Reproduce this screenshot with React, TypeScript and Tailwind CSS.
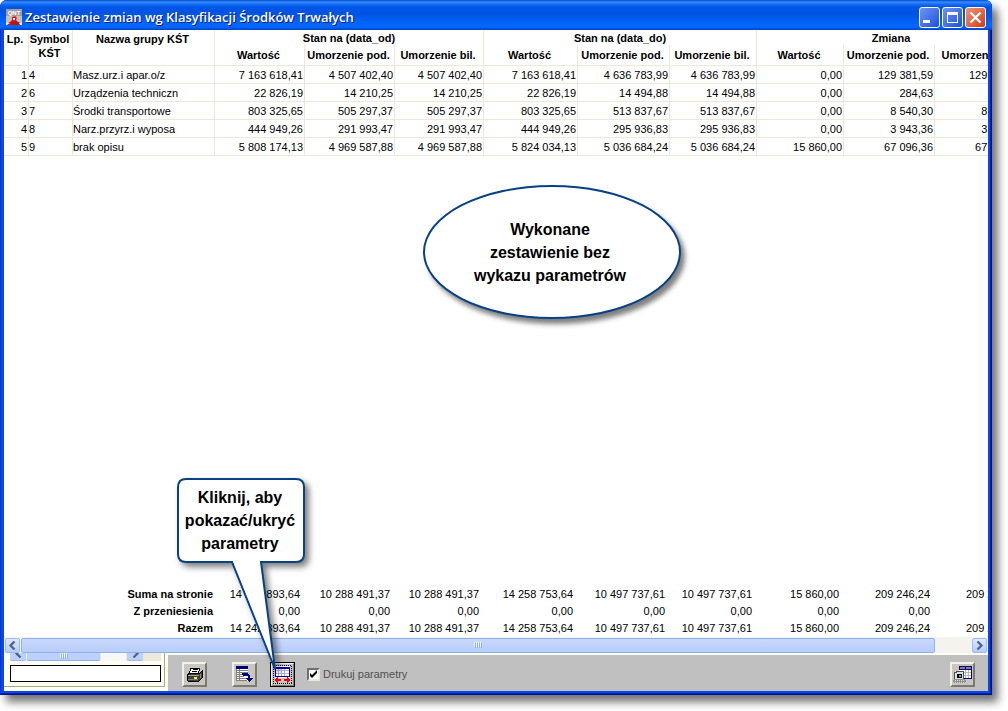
import React from "react";

type Row = { id: string; symbol: string; name: string; values: string[] };

const rows: Row[] = [
  { id: "1", symbol: "4", name: "Masz.urz.i apar.o/z", values: ["7 163 618,41", "4 507 402,40", "4 507 402,40", "7 163 618,41", "4 636 783,99", "4 636 783,99", "0,00", "129 381,59", "129 381,59"] },
  { id: "2", symbol: "6", name: "Urządzenia techniczn", values: ["22 826,19", "14 210,25", "14 210,25", "22 826,19", "14 494,88", "14 494,88", "0,00", "284,63", "284,63"] },
  { id: "3", symbol: "7", name: "Środki transportowe", values: ["803 325,65", "505 297,37", "505 297,37", "803 325,65", "513 837,67", "513 837,67", "0,00", "8 540,30", "8 540,30"] },
  { id: "4", symbol: "8", name: "Narz.przyrz.i wyposa", values: ["444 949,26", "291 993,47", "291 993,47", "444 949,26", "295 936,83", "295 936,83", "0,00", "3 943,36", "3 943,36"] },
  { id: "5", symbol: "9", name: "brak opisu", values: ["5 808 174,13", "4 969 587,88", "4 969 587,88", "5 824 034,13", "5 036 684,24", "5 036 684,24", "15 860,00", "67 096,36", "67 096,36"] },
];

const sums = ["14 242 893,64", "10 288 491,37", "10 288 491,37", "14 258 753,64", "10 497 737,61", "10 497 737,61", "15 860,00", "209 246,24", "209 246,24"];
const zeros = sums.map(() => "0,00");
const totals = [
  { label: "Suma na stronie", values: sums },
  { label: "Z przeniesienia", values: zeros },
  { label: "Razem", values: sums },
];

function Columns() {
  return (
    <colgroup>
      <col className="w-[25px]" />
      <col className="w-[44px]" />
      <col className="w-[142px]" />
      <col className="w-[90px]" />
      <col className="w-[90px]" />
      <col className="w-[89px]" />
      <col className="w-[94px]" />
      <col className="w-[92px]" />
      <col className="w-[87px]" />
      <col className="w-[87px]" />
      <col className="w-[91px]" />
      <col className="w-[91px]" />
    </colgroup>
  );
}

function DataTable() {
  const head = "border-b border-r border-[#ece9d8] p-0 pr-0.5 font-bold";
  const cell = "border-b border-r border-[#ece9d8] py-0 whitespace-nowrap";
  return (
    <table className="w-[1022px] table-fixed border-separate border-spacing-0 text-[11px] leading-[14px]">
      <Columns />
      <thead>
        <tr className="h-[15px]">
          <th rowSpan={2} className={`${head} pt-0.5 align-top`}>Lp.</th>
          <th rowSpan={2} className={`${head} pt-0.5 align-top`}>Symbol KŚT</th>
          <th rowSpan={2} className={`${head} pt-0.5 align-top`}>Nazwa grupy KŚT</th>
          <th colSpan={3} className="border-r border-[#ece9d8] p-0 font-bold">Stan na (data_od)</th>
          <th colSpan={3} className="border-r border-[#ece9d8] p-0 font-bold">Stan na (data_do)</th>
          <th colSpan={3} className="border-r border-[#ece9d8] p-0 font-bold">Zmiana</th>
        </tr>
        <tr className="h-[21px]">
          {[0, 1, 2].map((g) => (
            <React.Fragment key={g}>
              <th className={head}>Wartość</th>
              <th className={`${head} whitespace-nowrap`}>Umorzenie pod.</th>
              <th className={`${head} whitespace-nowrap`}>Umorzenie bil.</th>
            </React.Fragment>
          ))}
        </tr>
      </thead>
      <tbody>
        {rows.map((r) => (
          <tr key={r.id} className="h-[18px]">
            <td className={`${cell} pr-px pl-0 text-right`}>{r.id}</td>
            <td className={`${cell} px-0`}>{r.symbol}</td>
            <td className={`${cell} px-0`}>{r.name}</td>
            {r.values.map((v, i) => (
              <td key={i} className={`${cell} px-px text-right`}>{v}</td>
            ))}
          </tr>
        ))}
      </tbody>
    </table>
  );
}

function TotalsTable() {
  return (
    <table className="mb-px w-[1022px] table-fixed border-separate border-spacing-0 text-[11px] leading-[14px]">
      <Columns />
      <tbody>
        {totals.map((t) => (
          <tr key={t.label} className="h-[17px]">
            <th colSpan={3} className="p-0 pr-0.5 text-right font-bold">{t.label}</th>
            {t.values.map((v, i) => (
              <td key={i} className="p-0 pr-[5px] text-right whitespace-nowrap">{v}</td>
            ))}
          </tr>
        ))}
      </tbody>
    </table>
  );
}

function Logo() {
  return (
    <svg width="16" height="16" viewBox="0 0 16 16" aria-hidden="true">
      <rect width="16" height="16" fill="#c4c0c0" />
      <path d="M0 0h16v7H0z" fill="#a39c9c" />
      <text x="8" y="6" textAnchor="middle" fontSize="6" fontWeight="bold" fontFamily="Liberation Sans, sans-serif" fill="#fff">QNT</text>
      <path d="M6 8l3-1 2 2-1 2 3 3H3l3-3z" fill="#d81818" />
      <path d="M7 9h2v2H7z" fill="#fff" />
      <path d="M0 14q8-3 16 0v2H0z" fill="#c01414" />
      <path d="M0 13l4 1-3 2H0zM13 14l3-1v3h-2z" fill="#eee" />
    </svg>
  );
}

function Chevron({ left }: { left?: boolean }) {
  return (
    <svg width="9" height="9" viewBox="0 0 9 9" className="shrink-0" aria-hidden="true">
      <path d={left ? "M6.5 0.5l-4 4 4 4" : "M2.5 0.5l4 4-4 4"} fill="none" stroke="#4d6185" strokeWidth="2.2" />
    </svg>
  );
}

function Grip() {
  return (
    <svg width="8" height="6" viewBox="0 0 8 6" shapeRendering="crispEdges" aria-hidden="true">
      <path d="M0.5 0v5M2.5 0v5M4.5 0v5M6.5 0v5" stroke="#eef4fe" />
      <path d="M1.5 1v5M3.5 1v5M5.5 1v5M7.5 1v5" stroke="#8cb0f8" />
    </svg>
  );
}

function PrinterIcon() {
  return (
    <svg width="17" height="16" viewBox="0 0 17 16" className="shrink-0" shapeRendering="crispEdges" aria-hidden="true">
      <path d="M5 1h9l-2 6H3z" fill="#fff" stroke="#000" />
      <path d="M7 2.500h5M6 4.500h5" stroke="#000" />
      <path d="M1 8l3-2h10l2-2v7l-3 3H2l-1-1z" fill="#404040" stroke="#000" />
      <path d="M2 8.500h11" stroke="#a0a0a0" fill="none" />
      <path d="M2 12.500h10" stroke="#808080" />
      <path d="M8 10h3v2H8z" fill="#ff0" />
      <path d="M14.500 7v4" stroke="#909090" />
    </svg>
  );
}

function SheetArrowIcon() {
  return (
    <svg width="17" height="17" viewBox="0 0 17 17" className="shrink-0" shapeRendering="crispEdges" aria-hidden="true">
      <path d="M0 0h12v15H0z" fill="#fff" />
      <path d="M0 0h12v3H0z" fill="#000080" />
      <path d="M0 4.500h12M0 6.500h12M0 8.500h9M0 10.500h8M0 12.500h10M0 14.500h11M3.500 3v12M0.500 3v12" stroke="#808080" />
      <path d="M6 7h5l3 2v3h3l-4 4-4-4h3v-2H7z" fill="#000080" />
    </svg>
  );
}

function FitWidthIcon() {
  return (
    <svg width="19" height="19" viewBox="0 0 19 19" className="shrink-0" shapeRendering="crispEdges" aria-hidden="true">
      <rect x="0.5" y="0.5" width="18" height="18" fill="none" stroke="#000" strokeDasharray="1 1" />
      <path d="M2 1h15v12H2z" fill="#fff" />
      <path d="M2 5.500h14M2 8.500h14M5.500 2v10M8.500 2v10M11.500 2v10" stroke="#b4b4d0" />
      <path d="M2.500 2.500h14v9h-14z" stroke="#0000b0" fill="none" />
      <path d="M2 2h15v2H2z" fill="#0000b0" />
      <path d="M1.500 15l3.500-3v2h3v2H5v2zM17.500 15l-3.500-3v2h-3v2h3v2z" fill="#f00" />
    </svg>
  );
}

function ViewTableIcon() {
  return (
    <svg width="19" height="18" viewBox="0 0 19 18" className="shrink-0" shapeRendering="crispEdges" aria-hidden="true">
      <path d="M6 0h13v13H6z" fill="#fff" />
      <path d="M6 0h13v4H6z" fill="#000080" />
      <path d="M7 1h5v2H7zM13 1h5v2h-5z" fill="#808080" />
      <path d="M6 6.500h12M6 9.500h12M12.500 4v8M15.500 4v8" stroke="#b8b8b8" />
      <path d="M18.500 0v13M10 12.500h9" stroke="#000080" />
      <path d="M2 5h9v8H1V7z" fill="#e0e0e0" />
      <path d="M1.500 13V6.500h2V5.500h7v7" fill="none" stroke="#505050" />
      <path d="M4 8h5v4H4z" fill="#000" />
      <path d="M6 9h2v2H6z" fill="#00d8d8" />
      <path d="M1 13h11l1 2-1 2H1l-1-2z" fill="#909090" />
      <path d="M2 14.500h10M2 16.500h9" stroke="#d8d8d8" strokeDasharray="1 1" />
    </svg>
  );
}

const scrollButton =
  "flex h-[15px] w-[15px] shrink-0 items-center justify-center rounded-[2px] border border-[#9ebcf3] bg-linear-to-b from-[#dde7fe] to-[#b5cbfa]";
const toolButton =
  "flex h-[25px] w-[25px] items-center justify-center border-2 border-t-[#f4f2e8] border-l-[#f4f2e8] border-r-[#7c7a70] border-b-[#7c7a70] bg-[#c8c6be]";
const titleButton =
  "flex h-[21px] w-[21px] items-center justify-center rounded-[3px] border border-white";

export default function App() {
  return (
    <div className="flex min-h-screen overflow-hidden bg-white pr-4 pb-4 font-['Liberation_Sans',Arial,sans-serif] text-black">
      <main className="relative flex min-w-0 flex-1 flex-col rounded-t-[7px] bg-[#0a48e0] px-1 pb-1 shadow-[inset_-1px_-1px_0_#00138c,inset_1px_0_0_#0831d9,inset_-2px_-2px_0_#0020b4,6px_7px_8px_rgba(0,0,0,0.55)]">
        <header className="-mx-1 flex h-[30px] shrink-0 items-center rounded-t-[7px] bg-[linear-gradient(180deg,#0048c8_0,#3a8cff_2px,#1670f8_4px,#0055e5_7px,#0054e3_14px,#0066fa_23px,#0268ff_27px,#0040c0_30px)] pt-1 pr-1.5 pl-1.5">
          <Logo />
          <h1 className="ml-[3px] flex-1 truncate font-['Open_Sans','Noto_Sans',sans-serif] text-[13px] leading-[18px] font-semibold text-white [text-shadow:1px_1px_0_#0a1883]">
            Zestawienie zmian wg Klasyfikacji Środków Trwałych
          </h1>
          <div className="flex gap-0.5">
            <button type="button" aria-label="Minimalizuj" className={`${titleButton} bg-linear-to-br from-[#6f94f4] to-[#1c4fd8]`}>
              <svg width="15" height="15" viewBox="0 0 15 15" aria-hidden="true"><path d="M1 10h7v3H1z" fill="#fff" /></svg>
            </button>
            <button type="button" aria-label="Maksymalizuj" className={`${titleButton} bg-linear-to-br from-[#6f94f4] to-[#1c4fd8]`}>
              <svg width="13" height="13" viewBox="0 0 13 13" shapeRendering="crispEdges" aria-hidden="true"><path d="M1 1h11v11H1zM2 4v7h9V4z" fill="#fff" fillRule="evenodd" /></svg>
            </button>
            <button type="button" aria-label="Zamknij" className={`${titleButton} bg-linear-to-br from-[#f0937a] to-[#d03808]`}>
              <svg width="13" height="13" viewBox="0 0 13 13" aria-hidden="true"><path d="M1.500 1.500l10 10M11.500 1.500l-10 10" stroke="#fff" strokeWidth="2.300" /></svg>
            </button>
          </div>
        </header>

        <section className="flex min-h-0 flex-1 flex-col justify-between overflow-hidden bg-white">
          <DataTable />
          <TotalsTable />
        </section>

        <div className="flex h-4 shrink-0 items-center gap-px bg-[#f4f3ee] px-px">
          <button type="button" aria-label="Przewiń w lewo" className={scrollButton}><Chevron left /></button>
          <div className="flex h-[15px] flex-1 items-center justify-center rounded-[2px] border border-[#8fb0ee] bg-linear-to-b from-[#c9d8fc] to-[#b9cdfb]"><Grip /></div>
          <div className="w-[35px]" />
          <button type="button" aria-label="Przewiń w prawo" className={scrollButton}><Chevron /></button>
        </div>

        <footer className="flex h-[38px] shrink-0 bg-[#fffff0]">
          <div className="w-[164px] shrink-0 pr-[3px]">
            <div className="h-[34px] border-r border-b border-[#a8a698] pr-[3px] pl-1.5">
              <div className="flex h-2 gap-px overflow-hidden bg-[#ece9d8]">
                <div className="flex w-4 items-end justify-center overflow-hidden rounded-b-[2px] border-b border-[#9ebcf3] bg-[#bdd0fb] pb-0.5"><Chevron left /></div>
                <div className="flex w-[73px] items-start justify-center rounded-b-[2px] border-b border-[#8fb0ee] bg-[#bdd0fb]"><Grip /></div>
                <div className="w-[25px] bg-[#f8f8f4]" />
                <div className="flex w-4 items-end justify-center overflow-hidden rounded-b-[2px] border-b border-[#9ebcf3] bg-[#bdd0fb] pb-0.5"><Chevron /></div>
              </div>
              <input aria-label="Wartość parametru" className="mt-1 block h-[17px] w-full border border-black bg-white px-1 text-[11px] outline-none" />
            </div>
          </div>
          <div className="mt-0.5 flex flex-1 items-start bg-[#c0c0c0] pt-[7px] pr-[13px] pl-3.5">
            <button type="button" aria-label="Drukuj" className={toolButton}><PrinterIcon /></button>
            <button type="button" aria-label="Eksportuj zestawienie" className={`${toolButton} ml-[25px]`}><SheetArrowIcon /></button>
            <button type="button" aria-label="Pokaż lub ukryj parametry" className={`${toolButton} ml-[13px] outline outline-black -outline-offset-1`}><FitWidthIcon /></button>
            <label className="ml-3 flex h-[25px] items-center gap-[3px] text-[11px] text-[#505050]">
              <span className="grid">
                <input type="checkbox" defaultChecked className="peer col-start-1 row-start-1 h-[13px] w-[13px] appearance-none border-2 border-t-[#707070] border-l-[#707070] border-r-[#ece9d8] border-b-[#ece9d8] bg-white" />
                <svg width="13" height="13" viewBox="0 0 13 13" className="pointer-events-none invisible col-start-1 row-start-1 peer-checked:visible" aria-hidden="true"><path d="M3 5v3l2 2 5-5V2L5 7z" fill="#000" /></svg>
              </span>
              Drukuj parametry
            </label>
            <button type="button" aria-label="Podgląd tabeli" className={`${toolButton} ml-auto`}><ViewTableIcon /></button>
          </div>
        </footer>

        <aside className="absolute top-[185px] left-[423px] flex h-[134px] w-[258px] items-center justify-center rounded-[50%] border-2 border-[#084284] bg-white pr-1 text-center text-[16px] leading-[23px] font-bold shadow-[4px_5px_5px_rgba(0,0,0,0.5)]">
          <p>Wykonane<br />zestawienie bez<br />wykazu parametrów</p>
        </aside>

        <aside className="absolute top-[477px] left-[177px] h-[200px] w-[136px]">
          <svg width="136" height="200" viewBox="0 0 136 200" className="absolute inset-0 [filter:drop-shadow(4px_4px_3px_rgba(0,0,0,0.5))]" aria-hidden="true">
            <path d="M9 2H119Q127 2 127 10V77Q127 85 119 85H84L98 192L55 85H9Q1 85 1 77V10Q1 2 9 2Z" fill="#fff" stroke="#084284" strokeWidth="2" />
          </svg>
          <p className="relative w-[126px] pt-[9px] text-center text-[16px] leading-[23px] font-bold">
            Kliknij, aby<br />pokazać/ukryć<br />parametry
          </p>
        </aside>
      </main>
    </div>
  );
}
